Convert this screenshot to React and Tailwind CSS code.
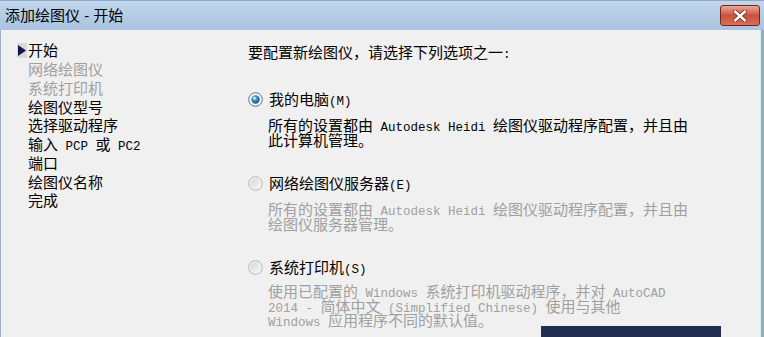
import React from 'react';

const M = ({ children }) => (
  <span className="font-['Liberation_Mono',monospace] text-[12.5px] leading-none">{children}</span>
);

const NAV = [
  { label: '开始', current: true },
  { label: '网络绘图仪', disabled: true },
  { label: '系统打印机', disabled: true },
  { label: '绘图仪型号' },
  { label: '选择驱动程序' },
  { label: <>输入<M> PCP </M>或<M> PC2</M></> },
  { label: '端口' },
  { label: '绘图仪名称' },
  { label: '完成' },
];

function Radio({ checked }) {
  return (
    <svg width="15" height="15" viewBox="0 0 15 15" className="shrink-0">
      <defs>
        <radialGradient id="rOn" cx="0.4" cy="0.35" r="0.7">
          <stop offset="0" stopColor="#9fd8ee" />
          <stop offset="0.45" stopColor="#3a8cb8" />
          <stop offset="1" stopColor="#1b4f78" />
        </radialGradient>
        <linearGradient id="rOff" x1="0" y1="0" x2="1" y2="1">
          <stop offset="0" stopColor="#d6d6d6" />
          <stop offset="1" stopColor="#f6f6f6" />
        </linearGradient>
      </defs>
      {checked ? (
        <>
          <circle cx="7.5" cy="7.5" r="6.8" fill="#f4f8fb" stroke="#4f7896" strokeWidth="1" />
          <circle cx="7.5" cy="7.5" r="4.2" fill="url(#rOn)" />
          <circle cx="6.4" cy="6.2" r="1.3" fill="#dff4fb" opacity="0.8" />
        </>
      ) : (
        <>
          <circle cx="7.5" cy="7.5" r="6.8" fill="#f2f2f2" stroke="#b5b5b5" strokeWidth="1" />
          <circle cx="7.5" cy="7.5" r="5" fill="url(#rOff)" />
        </>
      )}
    </svg>
  );
}

function Option({ checked, label, lines, className, gap }) {
  const tone = checked ? 'text-black' : 'text-[#a0a0a0]';
  return (
    <div className={className}>
      <div className="flex items-center gap-[6px] h-[18px]">
        <Radio checked={checked} />
        <span className="text-[15px] leading-[18px] text-black">{label}</span>
      </div>
      <div className={`pl-[20px] text-[15px] ${tone} ${gap}`}>
        {lines.map((l, i) => (
          <div key={i} className="h-[14.5px] leading-[14.5px] whitespace-pre">{l}</div>
        ))}
      </div>
    </div>
  );
}

export default function App() {
  return (
    <div className="relative w-[764px] h-[337px] overflow-hidden bg-[#f0f0f0] font-['Noto_Sans_CJK_SC',sans-serif] text-black">
      {/* Title bar */}
      <div className="h-[30px] flex items-start justify-between bg-gradient-to-b from-[#c2d6ec] to-[#a9c3e0] border-t border-[#8ea9c8]">
        <div className="pl-[5px] pt-[3px] text-[15px] leading-[22px] text-black">
          添加绘图仪<span className="font-['Liberation_Sans',sans-serif]"> - </span>开始
        </div>
        <div className="mt-[4px] mr-[4px] w-[40px] h-[21px] rounded-[3px] border border-[#7a2418] bg-gradient-to-b from-[#e8a898] via-[#c9503a] to-[#d9705a] grid place-items-center">
          <svg width="16" height="12" viewBox="0 0 16 12">
            <path d="M3 1.5 L13 10.5 M13 1.5 L3 10.5" stroke="#6b2a20" strokeWidth="4" strokeLinecap="round" />
            <path d="M3 1.5 L13 10.5 M13 1.5 L3 10.5" stroke="#ffffff" strokeWidth="2.4" strokeLinecap="round" />
          </svg>
        </div>
      </div>

      {/* Body */}
      <div className="flex h-[307px] border-l border-[#9fb0c2]">
        <nav className="w-[230px] shrink-0 pt-[11px] pl-[16px] text-[15px]">
          {NAV.map((n, i) => (
            <div key={i} className="flex items-center h-[18.75px] leading-[18px]">
              <span className="w-[11px] h-[18px] flex items-center">
                {n.current && (
                  <svg width="10" height="15" viewBox="0 0 10 15">
                    <rect x="0" y="0" width="10" height="15" fill="#d9d9d9" />
                    <path d="M1 2 L9 7.5 L1 13 Z" fill="#141452" />
                  </svg>
                )}
              </span>
              <span className={n.disabled ? 'text-[#a0a0a0]' : 'text-black'}>{n.label}</span>
            </div>
          ))}
        </nav>

        <main className="flex-1 pl-[17px] pt-[13px]">
          <p className="h-[18px] text-[15px] leading-[18px]">
            要配置新绘图仪，请选择下列选项之一<M>:</M>
          </p>

          <Option
            className="mt-[29px]"
            gap="mt-[10px]"
            checked
            label={<>我的电脑<M>(M)</M></>}
            lines={[
              <>所有的设置都由<M> Autodesk Heidi </M>绘图仪驱动程序配置，并且由</>,
              '此计算机管理。',
            ]}
          />

          <Option
            className="mt-[27px]"
            gap="mt-[10px]"
            label={<>网络绘图仪服务器<M>(E)</M></>}
            lines={[
              <>所有的设置都由<M> Autodesk Heidi </M>绘图仪驱动程序配置，并且由</>,
              '绘图仪服务器管理。',
            ]}
          />

          <Option
            className="mt-[27px]"
            gap="mt-[8px]"
            label={<>系统打印机<M>(S)</M></>}
            lines={[
              <>使用已配置的<M> Windows </M>系统打印机驱动程序，并对<M> AutoCAD</M></>,
              <><M>2014 - </M>简体中文<M> (Simplified Chinese) </M>使用与其他</>,
              <><M>Windows </M>应用程序不同的默认值。</>,
            ]}
          />
        </main>

        <div className="w-[4px] shrink-0 border-l border-[#d9e7ec] bg-[#8cb2bb]" />
      </div>

      {/* overlapping dark panel edge */}
      <div className="absolute left-[541px] top-[326px] w-[180px] h-[14px] bg-[#1f2d50]" />
    </div>
  );
}
